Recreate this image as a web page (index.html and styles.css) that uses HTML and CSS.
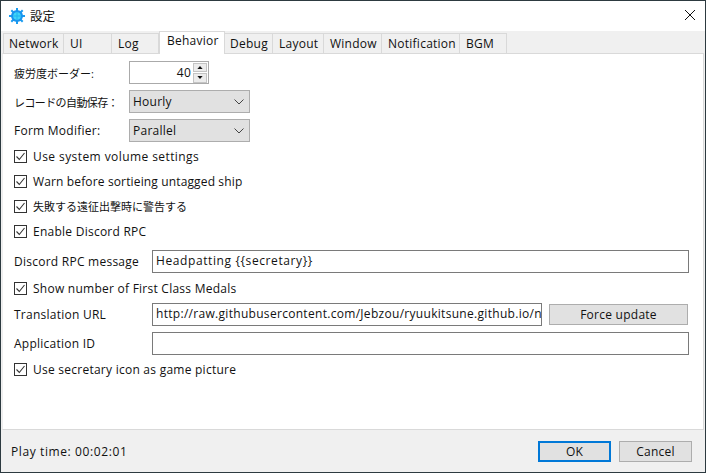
FILE: index.html
```html
<!DOCTYPE html>
<html lang="ja">
<head>
<meta charset="utf-8">
<title>設定</title>
<link rel="stylesheet" href="styles.css">
</head>
<body>
<div class="window">
  <header class="titlebar">
    <svg class="app-icon" viewBox="0 0 16 16" width="16" height="16" aria-hidden="true">
      <g stroke="#1a9cf0" stroke-width="2">
        <path d="M8 0v16M0 8h16M2.300 2.300l11.400 11.400M13.700 2.300 2.300 13.700"/>
      </g>
      <circle cx="8" cy="8" r="6" fill="#1a94ee"/>
      <circle cx="8" cy="8" r="3.800" fill="#3fd4f8"/>
      <path d="M8 4.500v7M4.500 8h7" stroke="#1fb4f2" stroke-width="1"/>
    </svg>
    <span class="title">設定</span>
    <svg class="close" viewBox="0 0 10 10" width="10" height="10" aria-hidden="true">
      <path d="M0 0l10 10M10 0 0 10" stroke="#111" stroke-width="1"/>
    </svg>
  </header>
  <nav class="tabs">
    <span class="tab w-network">Network</span>
    <span class="tab w-ui">UI</span>
    <span class="tab w-log">Log</span>
    <span class="tab active w-behavior">Behavior</span>
    <span class="tab w-debug">Debug</span>
    <span class="tab w-layout">Layout</span>
    <span class="tab w-window">Window</span>
    <span class="tab w-notification">Notification</span>
    <span class="tab w-bgm">BGM</span>
  </nav>
  <main class="pane">
    <div class="row spin-row">
      <label class="label cjk">疲労度ボーダー:</label>
      <div class="spin">
        <span class="spin-value">40</span>
        <div class="spin-btns">
          <span class="spin-btn"><svg viewBox="0 0 7 4" width="7" height="4"><path d="M3.500 0 7 4H0z" fill="#111"/></svg></span>
          <span class="spin-btn"><svg viewBox="0 0 7 4" width="7" height="4"><path d="M0 0h7L3.500 4z" fill="#111"/></svg></span>
        </div>
      </div>
    </div>
    <div class="row combo-row first-combo">
      <label class="label cjk cjk-narrow">レコードの自動保存：</label>
      <div class="combo"><span>Hourly</span><svg viewBox="0 0 10 6" width="10" height="6"><path d="M.5.5 5 5 9.500.5" fill="none" stroke="#444" stroke-width="1"/></svg></div>
    </div>
    <div class="row combo-row second-combo">
      <label class="label">Form Modifier:</label>
      <div class="combo"><span>Parallel</span><svg viewBox="0 0 10 6" width="10" height="6"><path d="M.5.5 5 5 9.500.5" fill="none" stroke="#444" stroke-width="1"/></svg></div>
    </div>
    <div class="check c1"><span class="box"><svg viewBox="0 0 13 13" width="13" height="13"><path d="M2.500 6.500 5.300 9.500 10.500 3" fill="none" stroke="#333" stroke-width="1.100"/></svg></span><span class="wide">Use system volume settings</span></div>
    <div class="check c2"><span class="box"><svg viewBox="0 0 13 13" width="13" height="13"><path d="M2.500 6.500 5.300 9.500 10.500 3" fill="none" stroke="#333" stroke-width="1.100"/></svg></span><span class="tight">Warn before sortieing untagged ship</span></div>
    <div class="check c2"><span class="box"><svg viewBox="0 0 13 13" width="13" height="13"><path d="M2.500 6.500 5.300 9.500 10.500 3" fill="none" stroke="#333" stroke-width="1.100"/></svg></span><span class="cjk">失敗する遠征出撃時に警告する</span></div>
    <div class="check c2"><span class="box"><svg viewBox="0 0 13 13" width="13" height="13"><path d="M2.500 6.500 5.300 9.500 10.500 3" fill="none" stroke="#333" stroke-width="1.100"/></svg></span>Enable Discord RPC</div>
    <div class="row field-row discord">
      <label class="label-wide">Discord RPC message</label>
      <div class="input wider">Headpatting {{secretary}}</div>
    </div>
    <div class="check c3"><span class="box"><svg viewBox="0 0 13 13" width="13" height="13"><path d="M2.500 6.500 5.300 9.500 10.500 3" fill="none" stroke="#333" stroke-width="1.100"/></svg></span>Show number of First Class Medals</div>
    <div class="row field-row url">
      <label class="label-wide">Translation URL</label>
      <div class="input url-input">http://raw.githubusercontent.com/Jebzou/ryuukitsune.github.io/n</div>
      <div class="button force">Force update</div>
    </div>
    <div class="row field-row appid">
      <label class="label-wide">Application ID</label>
      <div class="input"></div>
    </div>
    <div class="check c4"><span class="box"><svg viewBox="0 0 13 13" width="13" height="13"><path d="M2.500 6.500 5.300 9.500 10.500 3" fill="none" stroke="#333" stroke-width="1.100"/></svg></span>Use secretary icon as game picture</div>
  </main>
  <footer class="footer">
    <span class="playtime">Play time: 00:02:01</span>
    <div class="button ok">OK</div>
    <div class="button cancel">Cancel</div>
  </footer>
</div>
</body>
</html>
```

FILE: styles.css
```css
* { box-sizing: border-box; }
html, body { margin: 0; padding: 0; }
body {
  width: 706px;
  height: 473px;
  overflow: hidden;
  background: #2d3a40;
  font-family: "Open Sans", "Noto Sans CJK JP", sans-serif;
  font-size: 12px;
  letter-spacing: 0.25px;
  color: #111;
}
.window {
  width: 704px;
  height: 471px;
  margin: 1px 0 0 1px;
  display: flex;
  flex-direction: column;
  background: #f0f0f0;
}
.titlebar {
  height: 30px;
  flex: none;
  background: #fff;
  display: flex;
  align-items: center;
  padding: 0 10px 2px 8px;
}
.app-icon { flex: none; margin-top: 2px; }
.title { margin-left: 5px; font-size: 12.5px; letter-spacing: 0; }
.close { margin-left: auto; }
.tabs {
  height: 22px;
  flex: none;
  display: flex;
  align-items: flex-end;
  padding-left: 2px;
  position: relative;
  z-index: 1;
}
.tab {
  height: 20px;
  background: #f0f0f0;
  border: 1px solid #d9d9d9;
  border-left-width: 0;
  border-bottom: 0;
  padding-left: 6px;
  line-height: 19px;
  white-space: nowrap;
}
.tab:first-child { border-left-width: 1px; padding-left: 5px; }
.tab.active {
  height: 23px;
  margin-bottom: -1px;
  background: #fff;
  padding-left: 7px;
  line-height: 17px;
  border-left-width: 1px;
}
.w-network { width: 61px; }
.w-ui { width: 48px; }
.w-log { width: 47px; }
.w-behavior { width: 66px; }
.tab.w-debug { width: 48px; padding-left: 5px; }
.w-layout { width: 51px; }
.w-window { width: 58px; }
.w-notification { width: 78px; }
.w-bgm { width: 47px; }
.pane {
  height: 377px;
  flex: none;
  margin: 0 1px;
  background: #fff;
  border: 1px solid #d9d9d9;
  border-left-color: #eee;
  padding: 7px 0 0 11px;
}
.row { display: flex; align-items: center; }
.label { width: 115px; flex: none; white-space: nowrap; }
.label-wide { width: 138px; flex: none; white-space: nowrap; }
.cjk { font-size: 11px; letter-spacing: 0; }
.cjk-narrow { letter-spacing: -0.6px; }
.wide { letter-spacing: 0.42px; }
.tight { letter-spacing: 0.14px; }
.wider { letter-spacing: 0.6px; }
.spin {
  width: 80px;
  height: 23px;
  border: 1px solid #aaa;
  background: #fff;
  display: flex;
  align-items: center;
  justify-content: flex-end;
  padding-right: 1px;
}
.spin-value { margin-right: 2px; }
.spin-btns { width: 14px; display: flex; flex-direction: column; gap: 1px; }
.spin-btn {
  height: 9.500px;
  background: #ececec;
  border: 1px solid #c4c4c4;
  display: flex;
  align-items: center;
  justify-content: center;
}
.spin-btn svg { width: 6px; height: 3px; }
.combo {
  width: 121px;
  height: 23px;
  background: #e1e1e1;
  border: 1px solid #adadad;
  display: flex;
  align-items: center;
  justify-content: space-between;
  padding: 0 5px 0 3px;
}
.first-combo { margin-top: 6px; }
.second-combo { margin-top: 6px; }
.check {
  display: flex;
  align-items: center;
  height: 18px;
  gap: 6px;
}
.box {
  width: 13px;
  height: 13px;
  flex: none;
  border: 1px solid #333;
  background: #fff;
  display: block;
}
.box svg { margin: -1px; display: block; }
.c1 { margin-top: 5px; }
.c2 { margin-top: 7px; }
.c3 { margin-top: 6px; }
.c4 { margin-top: 5px; }
.field-row { height: 23px; }
.discord { margin-top: 10px; }
.url { margin-top: 6px; }
.appid { margin-top: 6px; }
.input {
  flex: none;
  width: 537px;
  height: 23px;
  border: 1px solid #7a7a7a;
  background: #fff;
  padding: 0 3px;
  line-height: 20px;
  white-space: nowrap;
  overflow: hidden;
}
.url-input { width: 390px; letter-spacing: 0.3px; }
.button {
  background: #e1e1e1;
  border: 1px solid #adadad;
  display: flex;
  align-items: center;
  justify-content: center;
}
.force { width: 139px; height: 21px; margin-left: 7px; }
.footer {
  flex: 1;
  display: flex;
  align-items: center;
  padding: 0 13px 0 10px;
}
.playtime { margin-right: auto; letter-spacing: 0.6px; }
.ok { width: 73px; height: 21px; border: 2px solid #0078d7; }
.cancel { width: 73px; height: 21px; margin-left: 8px; }
```
